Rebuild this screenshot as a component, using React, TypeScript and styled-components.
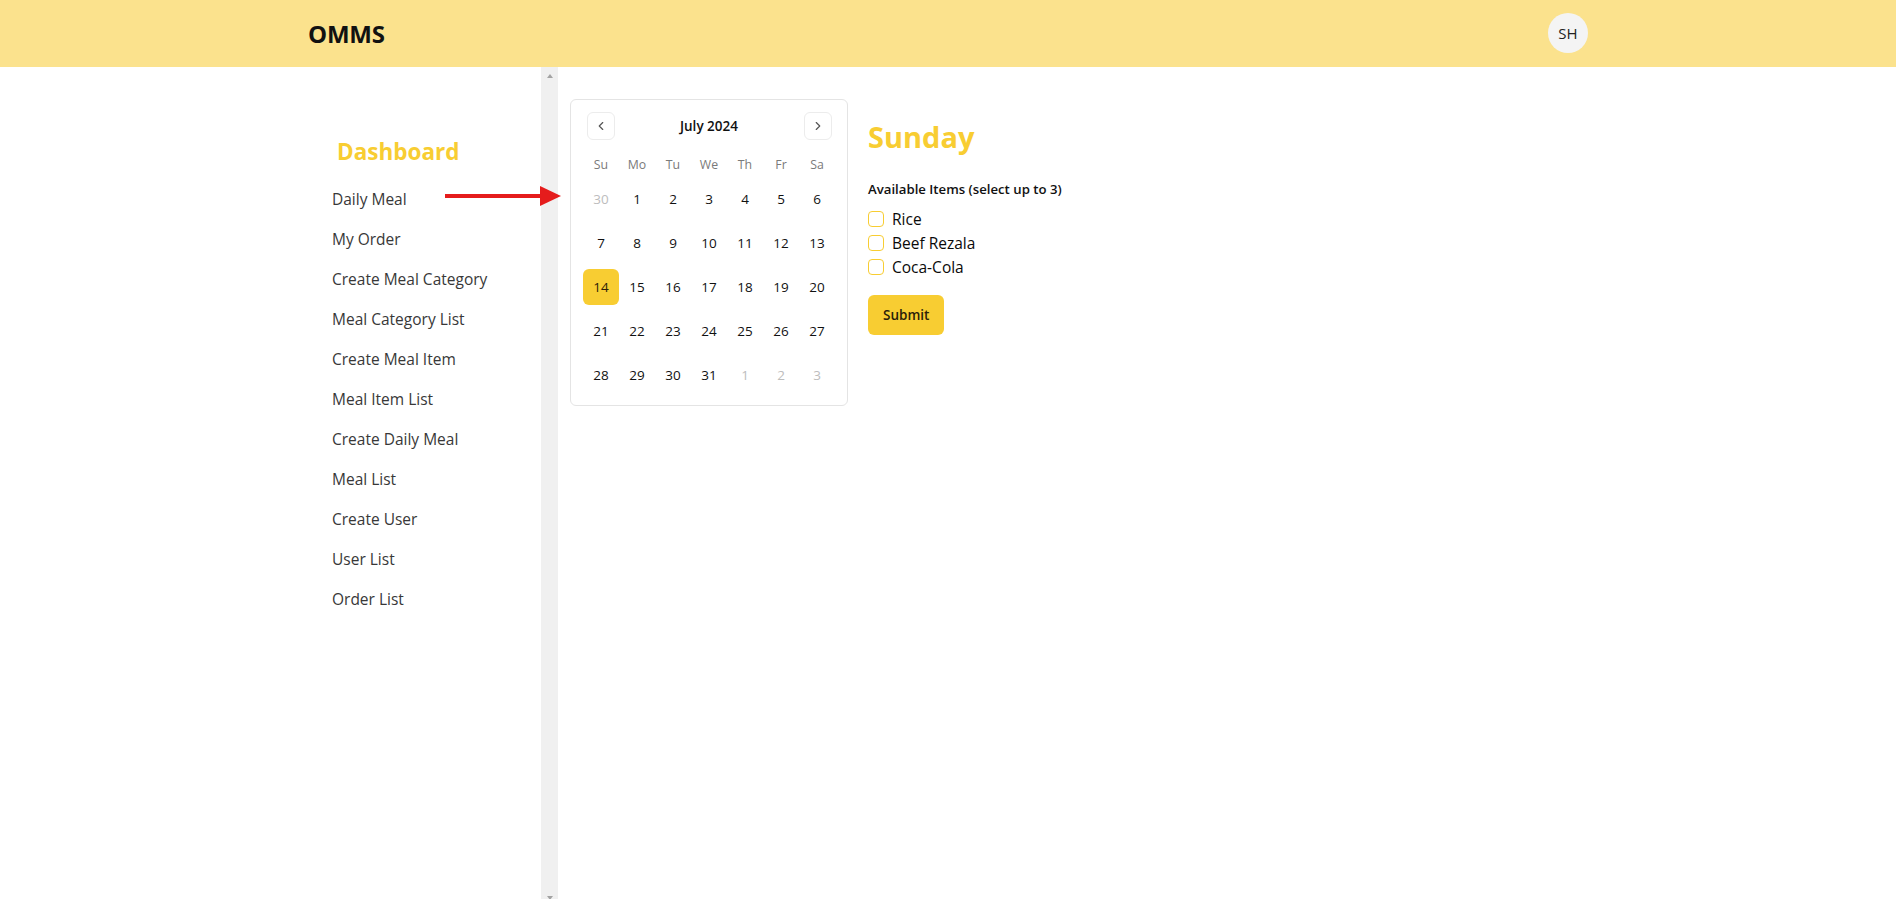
import React from "react";
import styled, { createGlobalStyle } from "styled-components";

const GlobalStyle = createGlobalStyle`
  html, body {
    margin: 0;
    padding: 0;
    overflow: hidden;
    background: #ffffff;
  }
  body {
    font-family: "Open Sans", "Noto Sans", Arial, sans-serif;
    color: #0a0a0a;
  }
  * {
    box-sizing: border-box;
  }
`;

const YELLOW = "#f8cd32";

const TopBar = styled.header`
  height: 67px;
  display: flex;
  align-items: center;
  justify-content: space-between;
  padding: 0 308px;
  background: #fbe28d;
`;

const Brand = styled.a`
  font-size: 24px;
  font-weight: 700;
  color: #111111;
  text-decoration: none;
  letter-spacing: -0.2px;
`;

const Avatar = styled.div`
  width: 40px;
  height: 40px;
  border-radius: 50%;
  background: #f4f4f4;
  display: flex;
  align-items: center;
  justify-content: center;
  font-size: 15px;
  color: #222222;
  margin-top: -2px;
`;

const Body = styled.div`
  position: relative;
  display: flex;
  height: calc(100vh - 60px);
`;

const Aside = styled.aside`
  width: 541px;
  padding: 69px 0 0 332px;
`;

const SideTitle = styled.h2`
  margin: 0 0 11px;
  padding-left: 5px;
  font-size: 22.5px;
  line-height: 32px;
  font-weight: 700;
  color: ${YELLOW};
`;

const SideLink = styled.a`
  display: block;
  padding: 8px 0;
  font-size: 15.5px;
  line-height: 24px;
  color: #383838;
  text-decoration: none;
  white-space: nowrap;
`;

const Track = styled.div`
  width: 17px;
  flex-shrink: 0;
  background: #f0f0f0;
  display: flex;
  flex-direction: column;
  justify-content: space-between;
  align-items: center;
`;

const TrackArrow = styled.div<{ $down?: boolean }>`
  height: 17px;
  display: flex;
  align-items: center;
  &::after {
    content: "";
    width: 0;
    height: 0;
    border-left: 3.5px solid transparent;
    border-right: 3.5px solid transparent;
    ${({ $down }) =>
      $down ? "border-top: 4px solid #a3a3a3;" : "border-bottom: 4px solid #a3a3a3;"}
  }
`;

const Main = styled.main`
  flex: 1;
  display: flex;
  align-items: flex-start;
  gap: 20px;
  padding: 32px 0 0 12px;
`;

const CalendarCard = styled.div`
  width: 278px;
  padding: 12px;
  border: 1px solid #e4e4e4;
  border-radius: 6px;
  background: #ffffff;
`;

const Caption = styled.div`
  position: relative;
  height: 28px;
  display: flex;
  align-items: center;
  justify-content: center;
  margin-bottom: 16px;
`;

const CaptionLabel = styled.div`
  font-size: 13.5px;
  font-weight: 600;
  color: #111111;
`;

const NavButton = styled.button<{ $side: "left" | "right" }>`
  position: absolute;
  top: 0;
  ${({ $side }) => ($side === "left" ? "left: 4px;" : "right: 3px;")}
  width: 28px;
  height: 28px;
  padding: 0;
  display: flex;
  align-items: center;
  justify-content: center;
  border: 1px solid #ececec;
  border-radius: 6px;
  background: transparent;
  cursor: pointer;
`;

const Grid = styled.div`
  display: grid;
  grid-template-columns: repeat(7, 36px);
  row-gap: 8px;
`;

const HeadCell = styled.div`
  height: 17px;
  display: flex;
  align-items: center;
  justify-content: center;
  font-size: 12.3px;
  color: #7a7a7a;
`;

const DayCell = styled.button<{ $outside?: boolean; $selected?: boolean }>`
  width: 36px;
  height: 36px;
  padding: 0;
  border: none;
  border-radius: 6px;
  font-family: inherit;
  font-size: 13.5px;
  color: ${({ $outside, $selected }) =>
    $selected ? "#2b2108" : $outside ? "#bdbdbd" : "#111111"};
  background: ${({ $selected }) => ($selected ? YELLOW : "transparent")};
  cursor: pointer;
`;

const Panel = styled.section`
  display: flex;
  flex-direction: column;
  align-items: flex-start;
  padding-top: 20px;
`;

const DayTitle = styled.h1`
  margin: 0 0 24px;
  font-size: 29px;
  line-height: 36px;
  font-weight: 700;
  color: ${YELLOW};
`;

const FieldLabel = styled.div`
  margin-bottom: 8px;
  font-size: 13.2px;
  line-height: 20px;
  font-weight: 600;
  color: #111111;
`;

const OptionRow = styled.label`
  display: flex;
  align-items: center;
  gap: 8px;
  height: 24px;
  font-size: 15.5px;
  color: #0a0a0a;
  cursor: pointer;
`;

const Box = styled.span`
  width: 16px;
  height: 16px;
  border: 1.5px solid ${YELLOW};
  border-radius: 4px;
  background: #ffffff;
`;

const SubmitButton = styled.button`
  margin-top: 16px;
  height: 40px;
  padding: 0 15px;
  border: none;
  border-radius: 6px;
  background: ${YELLOW};
  font-family: inherit;
  font-size: 13.5px;
  font-weight: 600;
  color: #2b2108;
  cursor: pointer;
`;

const Pointer = styled.svg`
  position: absolute;
  left: 445px;
  top: 119px;
`;

const links = [
  "Daily Meal",
  "My Order",
  "Create Meal Category",
  "Meal Category List",
  "Create Meal Item",
  "Meal Item List",
  "Create Daily Meal",
  "Meal List",
  "Create User",
  "User List",
  "Order List",
];

const weekdays = ["Su", "Mo", "Tu", "We", "Th", "Fr", "Sa"];

const days: { n: number; outside?: boolean }[] = [
  { n: 30, outside: true },
  ...Array.from({ length: 31 }, (_, i) => ({ n: i + 1 })),
  { n: 1, outside: true },
  { n: 2, outside: true },
  { n: 3, outside: true },
];

const items = ["Rice", "Beef Rezala", "Coca-Cola"];

const Chevron = ({ dir }: { dir: "left" | "right" }) => (
  <svg width="14" height="14" viewBox="0 0 24 24" fill="none" stroke="#555" strokeWidth="2" strokeLinecap="round" strokeLinejoin="round">
    {dir === "left" ? <path d="m15 18-6-6 6-6" /> : <path d="m9 18 6-6-6-6" />}
  </svg>
);

const App: React.FC = () => {
  return (
    <>
      <GlobalStyle />
      <TopBar>
        <Brand href="/">OMMS</Brand>
        <Avatar>SH</Avatar>
      </TopBar>

      <Body>
        <Aside>
          <SideTitle>Dashboard</SideTitle>
          {links.map((l) => (
            <SideLink key={l} href="#">
              {l}
            </SideLink>
          ))}
        </Aside>

        <Track>
          <TrackArrow />
          <TrackArrow $down />
        </Track>

        <Main>
          <CalendarCard>
            <Caption>
              <NavButton $side="left">
                <Chevron dir="left" />
              </NavButton>
              <CaptionLabel>July 2024</CaptionLabel>
              <NavButton $side="right">
                <Chevron dir="right" />
              </NavButton>
            </Caption>
            <Grid>
              {weekdays.map((w) => (
                <HeadCell key={w}>{w}</HeadCell>
              ))}
              {days.map((d, i) => (
                <DayCell key={i} $outside={d.outside} $selected={!d.outside && d.n === 14}>
                  {d.n}
                </DayCell>
              ))}
            </Grid>
          </CalendarCard>

          <Panel>
            <DayTitle>Sunday</DayTitle>
            <FieldLabel>Available Items (select up to 3)</FieldLabel>
            {items.map((it) => (
              <OptionRow key={it}>
                <Box />
                {it}
              </OptionRow>
            ))}
            <SubmitButton>Submit</SubmitButton>
          </Panel>
        </Main>

        <Pointer width="116" height="20" viewBox="0 0 116 20">
          <rect x="0" y="8" width="97" height="4" fill="#e51c1c" />
          <polygon points="95,0 116,10 95,20" fill="#e51c1c" />
        </Pointer>
      </Body>
    </>
  );
};

export default App;
